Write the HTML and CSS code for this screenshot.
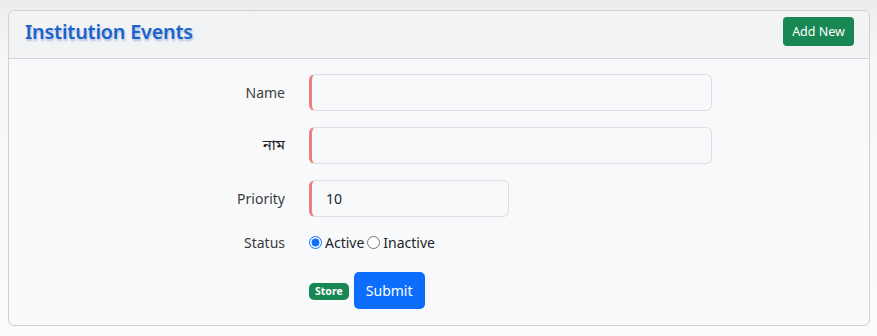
FILE: index.html
```html
<!DOCTYPE html>
<html>
<head>
<meta charset="utf-8">
<link rel="stylesheet" href="styles.css">
</head>
<body>
<div class="card">
  <div class="card-header">
    <h2 class="title">Institution Events</h2>
    <button class="btn btn-green">Add New</button>
  </div>
  <div class="card-body">
    <div class="row">
      <label class="lbl">Name</label>
      <input class="field wide" type="text">
    </div>
    <div class="row">
      <label class="lbl bn">নাম</label>
      <input class="field wide" type="text">
    </div>
    <div class="row">
      <label class="lbl">Priority</label>
      <input class="field narrow" type="text" value="10">
    </div>
    <div class="row status">
      <label class="lbl">Status</label>
      <div class="radios">
        <input type="radio" name="st" checked><span>Active</span>
        <input type="radio" name="st"><span>Inactive</span>
      </div>
    </div>
    <div class="row actions">
      <span class="lbl"></span>
      <div class="btns">
        <span class="badge">Store</span>
        <button class="btn btn-blue">Submit</button>
      </div>
    </div>
  </div>
</div>
</body>
</html>
```
FILE: styles.css
```css
html, body { margin: 0; }
body {
  padding: 10px 7px 0 8px;
  background: linear-gradient(#ececec 0, #f7f7f7 60px, #fbfbfb 100%);
  height: 336px;
  box-sizing: border-box;
  font-family: "Noto Sans", "Open Sans", sans-serif;
  color: #212529;
}
.card {
  width: 862px;
  height: 316px;
  box-sizing: border-box;
  border: 1px solid #cfd1d4;
  border-radius: 6px;
  background: #f8f9fa;
  overflow: hidden;
}
.card-header {
  height: 48px;
  box-sizing: border-box;
  background: #f2f3f5;
  border-bottom: 1px solid #d3d5d8;
  display: flex;
  align-items: center;
  justify-content: space-between;
  padding: 0 15px 0 16px;
}
.title {
  margin: 0;
  font-size: 19.8px;
  font-weight: 600;
  color: #1b62c9;
  text-shadow: 1px 2px 2px rgba(20, 80, 180, 0.3);
  letter-spacing: -0.2px;
  position: relative;
  top: -3px;
}
.btn {
  border: none;
  font-family: inherit;
  color: #fff;
  cursor: pointer;
}
.btn-green {
  background: #198754;
  border-radius: 4px;
  font-size: 12.5px;
  height: 29px;
  width: 71px;
  padding: 0;
  position: relative;
  top: -3px;
}
.card-body {
  padding: 15px 0 0 0;
}
.row {
  display: flex;
  align-items: center;
  margin-bottom: 16px;
}
.lbl {
  width: 300px;
  text-align: right;
  font-size: 14px;
  color: #3a3d40;
  padding-right: 24px;
  box-sizing: border-box;
  flex: none;
}
.lbl.bn { font-family: "Noto Sans Bengali", "Noto Serif Bengali", "Noto Sans", sans-serif; font-size: 15px; color: #222; }
.field {
  height: 37px;
  box-sizing: border-box;
  border: 1px solid #dcdee1;
  border-left: 3px solid #ef7f7f;
  border-radius: 6px;
  background: #f8f9fa;
  font-family: inherit;
  font-size: 14px;
  padding: 0 14px;
  color: #212529;
  outline: none;
}
.wide { width: 403px; }
.narrow { width: 200px; }
.status { margin-top: 4px; margin-bottom: 20px; }
.radios {
  display: flex;
  align-items: center;
  font-size: 14px;
  color: #212529;
}
.radios input {
  margin: 0 3px 0 0;
  width: 13px;
  height: 13px;
  accent-color: #0d6efd;
}
.radios span { margin-right: 3px; }
.btns { display: flex; align-items: center; gap: 5px; }
.badge {
  background: #198754;
  color: #fff;
  font-size: 10.5px;
  font-weight: 700;
  border-radius: 5px;
  padding: 0 6px;
  height: 17px;
  line-height: 17px;
  margin-top: 2px;
}
.btn-blue {
  background: #0d6efd;
  border-radius: 5px;
  font-size: 14px;
  height: 37px;
  width: 71px;
  padding: 0;
}
```
